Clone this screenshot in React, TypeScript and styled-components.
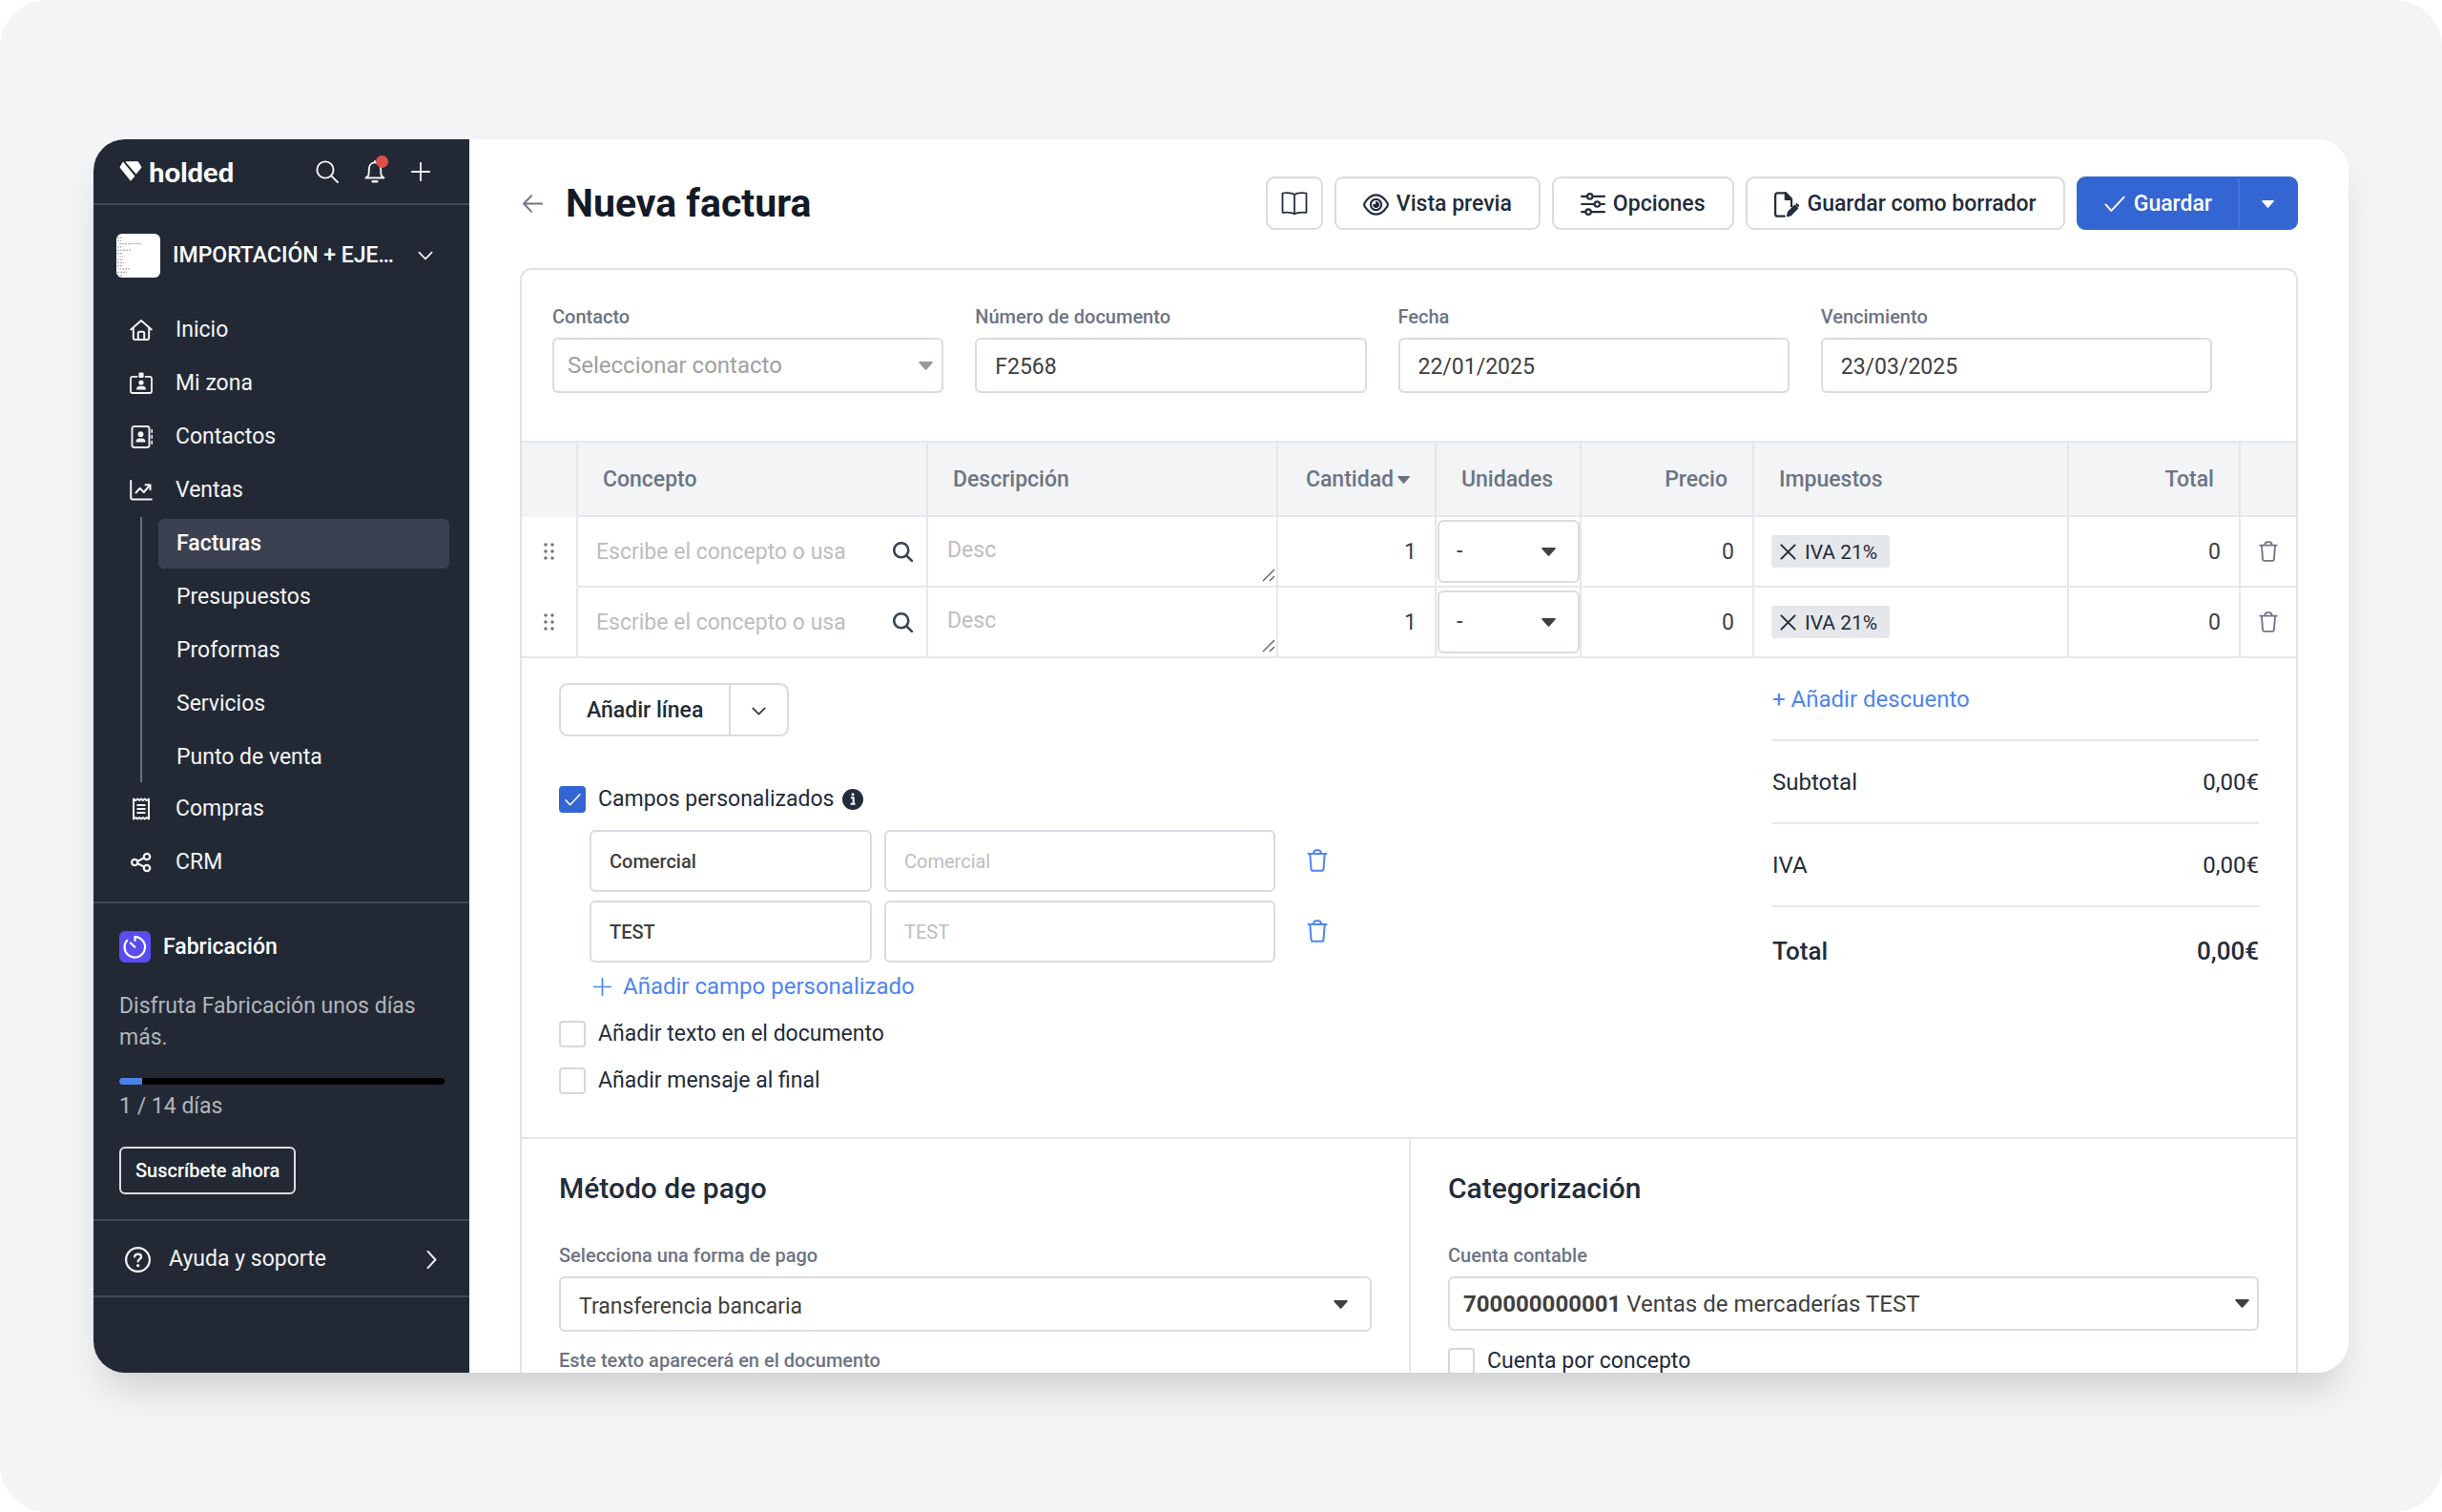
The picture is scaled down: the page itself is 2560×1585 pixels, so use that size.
import React, { useId, useState } from "react";
import styled, { createGlobalStyle, css } from "styled-components";

const color = {
  page: "#f2f4f6",
  navy: "#222935",
  navyActive: "#3b4150",
  navyLine: "#434956",
  ink: "#232c3a",
  title: "#141a26",
  value: "#404040",
  muted: "#6c7484",
  hint: "#bdbdbd",
  line: "#e5e7eb",
  border: "#d8dbe2",
  blue: "#3366d2",
  link: "#4f85ee",
};

const GlobalStyle = createGlobalStyle`
  *, *::before, *::after { box-sizing: border-box; }
  body { margin: 0; background: #fff; }
  body, button, input, select, textarea {
    font-family: Roboto, "Liberation Sans", sans-serif;
    font-size: 23px;
    line-height: 32px;
  }
  button, select { cursor: pointer; }
  h1, h2, p, ul, dl, dd { margin: 0; padding: 0; }
  ul { list-style: none; }
  svg { display: block; flex: none; }
`;

/* ---------- frame ---------- */

const Page = styled.div`
  height: 100vh;
  padding: 146px 98px;
  border-radius: 50px;
  background: ${color.page};
`;

const Window = styled.div`
  display: flex;
  height: 100%;
  overflow: hidden;
  border-radius: 33px;
  background: #fff;
  box-shadow: 0 26px 40px -12px rgba(0, 0, 0, 0.17);
`;

/* ---------- sidebar ---------- */

const Sidebar = styled.aside`
  flex: none;
  width: 394px;
  background: ${color.navy};
  color: #f3f4f6;
`;

const SideTop = styled.div`
  display: flex;
  align-items: center;
  justify-content: space-between;
  height: 69px;
  padding: 0 41px 0 27px;
  border-bottom: 2px solid ${color.navyLine};
`;

const Brand = styled.a`
  display: flex;
  align-items: center;
  gap: 7px;
  color: #fff;
  font-family: Lato, Roboto, sans-serif;
  font-size: 29px;
  font-weight: 900;
  line-height: 30px;
  text-decoration: none;
`;

const SideTools = styled.div`
  display: flex;
  align-items: center;
  gap: 26px;
`;

const PlainButton = styled.button`
  position: relative;
  display: flex;
  padding: 0;
  border: 0;
  background: none;
  color: inherit;
`;

const Dot = styled.span`
  position: absolute;
  top: -5px;
  right: -2px;
  width: 13px;
  height: 13px;
  border-radius: 50%;
  background: #df5049;
`;

const Account = styled.button`
  display: flex;
  align-items: center;
  width: 100%;
  height: 103px;
  padding: 2px 38px 0 24px;
  border: 0;
  background: none;
  color: #fff;
  font-weight: 500;
`;

const Avatar = styled.span`
  flex: none;
  width: 46px;
  height: 46px;
  margin-right: 13px;
  border-radius: 6px;
  background: #fff;
  overflow: hidden;
`;

const AccountName = styled.span`
  flex: 1;
  text-align: left;
`;

const NavLink = styled.a`
  display: flex;
  align-items: center;
  gap: 24px;
  height: 56px;
  padding-left: 38px;
  color: inherit;
  text-decoration: none;
`;

const SubNav = styled.ul`
  display: grid;
  gap: 4px;
  margin: 0 21px 0 49px;
  padding: 2px 0 0 17px;
  border-left: 2px solid #6b717d;
`;

const SubLink = styled.a<{ $active?: boolean }>`
  display: flex;
  align-items: center;
  height: 52px;
  padding-left: 19px;
  border-radius: 6px;
  color: inherit;
  text-decoration: none;
  ${(p) =>
    p.$active &&
    css`
      background: ${color.navyActive};
      color: #fff;
      font-weight: 500;
    `}
`;

const Trial = styled.section`
  margin-top: 13px;
  padding: 29px 26px 26px 27px;
  border-top: 2px solid ${color.navyLine};
  border-bottom: 2px solid ${color.navyLine};
  color: #b1b5bc;
`;

const TrialTitle = styled.h2`
  display: flex;
  align-items: center;
  gap: 13px;
  height: 33px;
  color: #fff;
  font-size: 23px;
  font-weight: 500;
`;

const TrialText = styled.p`
  margin: 29px 0 26px;
  line-height: 33px;
`;

const Track = styled.div`
  height: 7px;
  margin-bottom: 7px;
  border-radius: 4px;
  background: #000;
  overflow: hidden;
`;

const Fill = styled.div`
  height: 100%;
  background: #4b82e8;
`;

const Subscribe = styled.button`
  height: 50px;
  margin-top: 26px;
  padding: 0 15px;
  border: 2px solid #dcdee1;
  border-radius: 6px;
  background: none;
  color: #fff;
  font-size: 20px;
  font-weight: 500;
`;

const Help = styled.a`
  display: flex;
  align-items: center;
  gap: 19px;
  height: 80px;
  padding: 2px 30px 0 33px;
  border-bottom: 2px solid ${color.navyLine};
  color: inherit;
  text-decoration: none;

  span { flex: 1; }
`;

/* ---------- main ---------- */

const Main = styled.main`
  flex: 1;
  min-width: 0;
  padding: 39px 53px 0 53px;
  color: ${color.ink};
`;

const Header = styled.header`
  display: flex;
  align-items: center;
  height: 56px;
  margin-bottom: 40px;
`;

const Back = styled.a`
  display: flex;
  margin: 0 24px 0 3px;
  color: #6e7583;
`;

const Title = styled.h1`
  flex: 1;
  color: ${color.title};
  font-size: 41px;
  font-weight: 700;
  line-height: 48px;
`;

const Actions = styled.div`
  display: flex;
  gap: 12px;
`;

const Action = styled.button<{ $square?: boolean }>`
  display: flex;
  align-items: center;
  justify-content: center;
  gap: 8px;
  height: 56px;
  padding: ${(p) => (p.$square ? "0 14px" : "2px 28px 0")};
  border: 2px solid ${color.border};
  border-radius: 9px;
  background: #fff;
  color: ${color.ink};
  font-weight: 500;
`;

const Split = styled.div<{ $primary?: boolean }>`
  display: flex;
  width: max-content;
  height: 56px;
  border: 2px solid ${(p) => (p.$primary ? color.blue : color.border)};
  border-radius: 9px;
  background: ${(p) => (p.$primary ? color.blue : "#fff")};
  color: ${(p) => (p.$primary ? "#fff" : color.ink)};
  overflow: hidden;
`;

const SplitMain = styled.button`
  display: flex;
  align-items: center;
  gap: 9px;
  padding: 2px 27px 0;
  border: 0;
  background: none;
  color: inherit;
  font-weight: 500;
`;

const SplitToggle = styled.button<{ $line: string }>`
  display: flex;
  align-items: center;
  justify-content: center;
  width: 61px;
  padding: 2px 0 0;
  border: 0;
  border-left: 2px solid ${(p) => p.$line};
  background: none;
  color: inherit;
`;

const Card = styled.div`
  border: 2px solid #e0e2e6;
  border-bottom: 0;
  border-radius: 12px 12px 0 0;
`;

const Fields = styled.div`
  display: grid;
  grid-template-columns: repeat(4, 1fr);
  gap: 33px;
  padding: 37px 88px 50px 32px;
`;

const Field = styled.div`
  display: flex;
  flex-direction: column;
  gap: 10px;
`;

const Label = styled.label`
  color: ${color.muted};
  font-size: 20px;
  font-weight: 500;
  line-height: 24px;
`;

const control = css`
  width: 100%;
  border: 2px solid ${color.border};
  border-radius: 6px;
  background: #fff;
  color: ${color.value};
`;

const TextInput = styled.input<{ $custom?: boolean; $strong?: boolean }>`
  ${control}
  height: ${(p) => (p.$custom ? 65 : 58)}px;
  padding: ${(p) => (p.$custom ? "0" : "2px")} 19px 0;
  font-size: ${(p) => (p.$custom ? 20 : 23)}px;
  font-weight: ${(p) => (p.$strong ? 500 : 400)};

  &::placeholder { color: ${color.hint}; opacity: 1; }
`;

const SelectBox = styled.div<{ $end: number }>`
  display: grid;
  align-items: center;

  & > * { grid-area: 1 / 1; }
  & > svg {
    justify-self: end;
    margin-right: ${(p) => p.$end}px;
    pointer-events: none;
  }
`;

const Select = styled.select<{ $tall?: boolean; $pad: number; $drop?: number; $faded?: boolean }>`
  ${control}
  appearance: none;
  height: ${(p) => (p.$tall ? 66 : 58)}px;
  padding: ${(p) => p.$drop ?? 0}px ${(p) => p.$pad}px 0;
  ${(p) => p.$faded && "color: #a0a0a0; font-size: 24px;"}
`;

const Combo = styled.button`
  ${control}
  height: 57px;
  padding: 0 14px;
  font-size: 24px;
  text-align: left;
`;

/* ---------- lines table ---------- */

const Lines = styled.table`
  width: 100%;
  table-layout: fixed;
  border-collapse: separate;
  border-spacing: 0;
  border-top: 2px solid ${color.line};
`;

const Th = styled.th<{ $align?: string; $bare?: boolean }>`
  height: 78px;
  padding: 2px 26px 0;
  border-right: 2px solid ${color.line};
  border-bottom: 2px solid ${(p) => (p.$bare ? color.page : color.line)};
  background: ${color.page};
  color: ${color.muted};
  font-weight: 500;
  text-align: ${(p) => p.$align ?? "left"};
  white-space: nowrap;

  &:last-child { border-right: 0; }
`;

const Sort = styled.button`
  display: inline-flex;
  align-items: center;
  gap: 4px;
  padding: 0;
  border: 0;
  background: none;
  color: inherit;
  font-weight: 500;
`;

const Td = styled.td<{ $open?: boolean }>`
  height: 74px;
  padding: 0;
  border-right: 2px solid ${color.line};
  border-bottom: 2px solid ${(p) => (p.$open ? "#fff" : color.line)};

  &:last-child { border-right: 0; }
`;

const Cell = styled.div<{ $center?: boolean }>`
  position: relative;
  display: flex;
  align-items: center;
  justify-content: ${(p) => (p.$center ? "center" : "flex-start")};
  height: 72px;
`;

const CellInput = styled.input<{ $end?: boolean }>`
  flex: 1;
  min-width: 0;
  padding: 2px 19px 0;
  border: 0;
  background: none;
  color: ${color.value};
  text-align: ${(p) => (p.$end ? "right" : "left")};

  &::placeholder { color: ${color.hint}; opacity: 1; }
`;

const CellArea = styled.textarea`
  flex: 1;
  min-width: 0;
  height: 36px;
  padding: 1px 20px;
  border: 0;
  background: none;
  resize: none;

  &::placeholder { color: ${color.hint}; opacity: 1; }
`;

const Grip = styled.svg`
  position: absolute;
  right: 1px;
  bottom: 4px;
`;

const SearchSlot = styled(PlainButton)`
  margin-right: 14px;
  color: #3a4557;
`;

const UnitCell = styled.div`
  padding: 3px 0 3px 1px;
`;

const Tag = styled.span`
  display: flex;
  align-items: center;
  gap: 9px;
  height: 34px;
  margin-left: 18px;
  padding: 1px 13px 0 9px;
  border-radius: 3px;
  background: #e5e7eb;
  font-size: 21px;
`;

/* ---------- extras and totals ---------- */

const Body = styled.div`
  display: flex;
  justify-content: space-between;
  padding: 0 39px;
  border-bottom: 2px solid ${color.line};
`;

const Extras = styled.div`
  padding: 26px 0 45px;
`;

const CheckLine = styled.div<{ $top: number }>`
  display: flex;
  align-items: center;
  height: 28px;
  margin-top: ${(p) => p.$top}px;

  & > svg { margin-left: 9px; }
`;

const TickBox = styled.span`
  display: grid;
  place-items: center;
  margin-right: 13px;
  color: #fff;

  & > * { grid-area: 1 / 1; }
  & > svg { pointer-events: none; }
`;

const Tick = styled.input`
  appearance: none;
  width: 28px;
  height: 28px;
  margin: 0;
  border: 2px solid #d5d7da;
  border-radius: 4px;
  background: #fff;

  &:checked {
    border-color: ${color.blue};
    background: ${color.blue};
  }
`;

const CustomFields = styled.div`
  display: grid;
  gap: 9px;
  margin: 18px 0 9px 32px;
`;

const CustomRow = styled.div`
  display: grid;
  grid-template-columns: 296px 410px auto;
  align-items: center;
  gap: 13px;
`;

const Remove = styled(PlainButton)<{ $blue?: boolean }>`
  margin: ${(p) => (p.$blue ? "0 0 2px 19px" : "0")};
  color: ${(p) => (p.$blue ? color.link : "#6e7583")};
`;

const LinkButton = styled.button<{ $indent?: boolean }>`
  display: flex;
  align-items: center;
  gap: 12px;
  margin-left: ${(p) => (p.$indent ? 36 : 0)}px;
  padding: 0;
  border: 0;
  background: none;
  color: ${color.link};
  font-size: 24px;
`;

const Totals = styled.div`
  flex: none;
  width: 510px;
`;

const TotalRow = styled.div<{ $grand?: boolean }>`
  display: flex;
  align-items: center;
  justify-content: space-between;
  height: ${(p) => (p.$grand ? 92 : 87)}px;
  font-size: 24px;
  ${(p) =>
    p.$grand
      ? "font-size: 26px; font-weight: 500;"
      : `border-bottom: 2px solid ${color.line};`}
`;

const Bottom = styled.div`
  display: grid;
  grid-template-columns: 1fr 1fr;
`;

const Panel = styled.section`
  display: flex;
  flex-direction: column;
  padding: 34px 39px 40px;

  & + & { border-left: 2px solid ${color.line}; }
`;

const PanelTitle = styled.h2`
  margin-bottom: 40px;
  font-size: 30px;
  font-weight: 500;
  line-height: 36px;
`;

const Note = styled(Label)`
  display: block;
  margin: 18px 0 10px;
`;

/* ---------- icons ---------- */

type IconProps = { size?: number; w?: number; children: React.ReactNode; box?: string };
const Icon = ({ size = 24, w = 2, box = "0 0 24 24", children }: IconProps) => (
  <svg width={size} height={size} viewBox={box} fill="none" stroke="currentColor" strokeWidth={w} strokeLinecap="round" strokeLinejoin="round" aria-hidden="true">
    {children}
  </svg>
);

const Mark = () => (
  <svg width="24" height="21" viewBox="0 0 23 21" fill="#fff" stroke="#fff" strokeWidth="1.2" strokeLinejoin="round" aria-hidden="true">
    <path d="M6.900 .8h12L22.300 6.400 17.200 12.700z" />
    <path d="M3.500 1.500.7 6.400 11.500 19.800l3.600-4.200z" />
  </svg>
);
const SearchIcon = ({ size = 24, w = 2 }) => (
  <Icon size={size} w={w}><circle cx="10" cy="10" r="8.600" /><path d="m16.300 16.300 6.700 6.700" /></Icon>
);
const BellIcon = () => (
  <Icon w={1.9}>
    <path d="M12 1v1.200M4.900 16.600c.9-1.700.9-3.800.9-7.200C5.800 5.200 8.400 2.400 12 2.400s6.200 2.800 6.200 7c0 3.400 0 5.500.9 7.200l2.400 1.900h-19z" />
    <path d="M9.800 22.300h4.400" strokeWidth="2.600" />
  </Icon>
);
const PlusIcon = ({ size = 20, w = 2.2 }) => <Icon size={size} w={w}><path d="M12 1v22M1 12h22" /></Icon>;
const Chevron = ({ size = 15, dir = "down" }) => (
  <Icon size={size} w={2.4}><path d={dir === "down" ? "m2 7 10 10L22 7" : "m7 1 10 11L7 23"} /></Icon>
);
const HomeIcon = () => (
  <Icon w={2}><path d="M1.2 11.4 12 2l10.8 9.4M3.8 9.4V20c0 1.300.7 2 2 2h12.400c1.300 0 2-.7 2-2V9.400" /><path d="M8.800 21.500v-6.300c0-1 .5-1.500 1.500-1.500h3.400c1 0 1.500.5 1.500 1.500v6.300" /></Icon>
);
const BadgeIcon = () => (
  <Icon w={1.8}>
    <path d="M7.500 4.800H3c-1.200 0-2 .8-2 2V20c0 1.200.8 2 2 2h18c1.200 0 2-.8 2-2V6.800c0-1.200-.8-2-2-2h-4.500" />
    <g fill="currentColor" stroke="none"><rect x="9.400" y=".6" width="5.200" height="5.400" rx="1.200" /><circle cx="12" cy="11" r="2.600" /><path d="M7 18.600c0-2.400 1.400-3.800 3.400-3.800h3.200c2 0 3.400 1.400 3.400 3.800z" /></g>
  </Icon>
);
const ContactsIcon = () => (
  <Icon w={1.9}>
    <rect x="2.500" y="1" width="18" height="22" rx="2.200" />
    <path d="M23.200 4.500v2.800M23.200 10.500v2.800M23.200 16.500v2.800" strokeWidth="1.600" />
    <g fill="currentColor" stroke="none"><circle cx="11.500" cy="9.200" r="2.900" /><path d="M6.500 17.500c0-2.600 1.500-4 3.500-4h3c2 0 3.500 1.400 3.500 4z" /></g>
  </Icon>
);
const SalesIcon = () => (
  <Icon w={2}><path d="M1.200 2v17.500c0 1.200.8 2 2 2h19.600" /><path d="m6.500 14.500 4-4.700 4.300 4.200 6.200-7.300M16.500 6.200h5v5" /></Icon>
);
const ReceiptIcon = () => (
  <Icon w={2}>
    <path d="M4 1.500 6.300 3l2-1.500L10.200 3 12 1.500 13.800 3l1.900-1.500 2 1.500L20 1.500v21L17.700 21l-2 1.500-1.900-1.500-1.800 1.500-1.800-1.500-1.900 1.500-2-1.500L4 22.500z" />
    <path d="M8.200 8h7.600M8.200 12h7.600M8.200 16h7.600" />
  </Icon>
);
const ShareIcon = () => (
  <Icon w={2.2}><circle cx="5.200" cy="12" r="3.200" /><circle cx="18" cy="6" r="3.200" /><circle cx="18" cy="18" r="3.200" /><path d="m8.200 10.700 6.800-3.300M8.200 13.300l6.800 3.300" /></Icon>
);
const TimerIcon = () => (
  <svg width="33" height="33" viewBox="0 0 33 33" fill="none" stroke="#fff" strokeWidth="2.200" strokeLinecap="round" aria-hidden="true">
    <rect width="33" height="33" rx="6" fill="#5a4df0" stroke="none" />
    <path d="M16.500 10V6.200A10.700 10.700 0 1 1 8.300 9.800M12 12.500l4.300 4.200" />
  </svg>
);
const HelpIcon = () => (
  <Icon size={27} w={2}><circle cx="12" cy="12" r="11" /><path d="M8.900 9.200c.3-1.700 1.500-2.500 3.200-2.500 1.800 0 3.100 1 3.100 2.600 0 2.400-3.100 2.400-3.100 4.400" /><path d="M12.100 17.400v.1" strokeWidth="2.800" /></Icon>
);
const BackIcon = () => <Icon size={21} w={2.2}><path d="M23 12H1.500M10.500 2.500 1.200 12l9.300 9.500" /></Icon>;
const BookIcon = () => (
  <Icon size={28} w={1.5}><path d="M12 4.500C10 2.800 5 2.600 1.300 3v17.400c3.700-.4 8.700-.2 10.700 1.400 2-1.600 7-1.800 10.700-1.400V3C19 2.600 14 2.800 12 4.500zV21.800" /></Icon>
);
const EyeIcon = () => (
  <Icon size={27} w={1.9}>
    <path d="M12 3c4.600 0 7.800 3 10.500 7.300.7 1.200.7 2.200 0 3.400C19.800 18 16.600 21 12 21s-7.800-3-10.500-7.300c-.7-1.200-.7-2.200 0-3.400C4.200 6 7.400 3 12 3z" />
    <circle cx="12" cy="12" r="5" /><path d="M12 9.500V12H9.500a2.600 2.600 0 1 0 2.500-2.500z" fill="currentColor" strokeWidth="1" />
  </Icon>
);
const SlidersIcon = () => (
  <Icon size={26} w={2}>
    <path d="M1 4.500h5M12 4.500h11M1 12h12M19 12h4M1 19.500h3.500M10.500 19.500H23" />
    <circle cx="9" cy="4.500" r="2.500" /><circle cx="16" cy="12" r="2.500" /><circle cx="7.500" cy="19.500" r="2.500" />
  </Icon>
);
const DraftIcon = () => (
  <Icon size={27} w={2}>
    <path d="M9.500 22.800H3.200c-1.300 0-2.200-.8-2.200-2.200V3.400C1 2 1.900 1.200 3.200 1.200h7.300L16 7v6.500" />
    <path d="M10.500 1.200V7H16z" fill="currentColor" />
    <path d="m13.300 19.200 5.800-6 2.200 2.200-5.800 6-3 .9zM21 11.700l1.300 1.400" fill="currentColor" />
  </Icon>
);
const CheckIcon = ({ size = 22, w = 2.1 }) => <Icon size={size} w={w}><path d="m1.500 12.500 6.500 7L22.500 4" /></Icon>;
const Caret = ({ width = 15, fill = "#404040" }) => (
  <svg width={width} height={Math.round(width * 0.6)} viewBox="0 0 15 9" fill={fill} aria-hidden="true"><path d="M1 0h13q1.200.4.500 1.400L8.300 8.500q-.8.700-1.600 0L.5 1.400Q-.2.400 1 0z" /></svg>
);
const TrashIcon = ({ size = 22 }) => (
  <Icon size={size} w={2}><path d="M2.500 5h19M4.300 5l1.200 15.800c.1 1.200.8 1.900 2 1.900h9c1.200 0 1.900-.7 2-1.900L19.700 5M7.800 5c.4-2.400 1.400-3.700 3-3.700h2.400c1.600 0 2.600 1.300 3 3.700" /></Icon>
);
const DotsIcon = () => (
  <svg width="11" height="18" viewBox="0 0 11 18" fill="#6e7583" aria-hidden="true">
    {[2, 9].map((x) => [2, 9, 16].map((y) => <circle key={`${x}${y}`} cx={x} cy={y} r="1.800" />))}
  </svg>
);
const CloseIcon = () => <Icon size={17} w={2.8}><path d="m2 2 20 20M22 2 2 22" /></Icon>;
const InfoIcon = () => (
  <svg width="22" height="22" viewBox="0 0 22 22" aria-hidden="true">
    <circle cx="11" cy="11" r="11" fill={color.ink} />
    <path d="M9 9.200h2.700v6.300M8.700 15.800h4.800" stroke="#fff" strokeWidth="2" fill="none" /><circle cx="11" cy="5.700" r="1.500" fill="#fff" />
  </svg>
);
const Thumb = () => (
  <svg width="46" height="46" viewBox="0 0 46 46" stroke="#9a9da3" strokeWidth="1" aria-hidden="true">
    {[5, 4, 24, 5, 14, 6, 4, 5, 7, 5, 11, 10, 5].map((w, i) => (
      <path key={i} d={`M${i % 4 === 2 ? 3 : 1} ${4 + i * 3.3}h${w}`} strokeDasharray="2 1" />
    ))}
  </svg>
);

/* ---------- parts ---------- */

function LabeledInput({ label, value }: { label: string; value: string }) {
  const id = useId();
  return (
    <Field>
      <Label htmlFor={id}>{label}</Label>
      <TextInput id={id} defaultValue={value} />
    </Field>
  );
}

function CheckRow({ label, top, on, info }: { label: string; top: number; on?: boolean; info?: boolean }) {
  const id = useId();
  const [checked, setChecked] = useState(!!on);
  return (
    <CheckLine $top={top}>
      <TickBox>
        <Tick id={id} type="checkbox" checked={checked} onChange={(e) => setChecked(e.target.checked)} />
        {checked && <CheckIcon size={17} />}
      </TickBox>
      <label htmlFor={id}>{label}</label>
      {info && <InfoIcon />}
    </CheckLine>
  );
}

function LineRow({ last }: { last?: boolean }) {
  return (
    <tr>
      <Td $open={!last}><Cell $center><DotsIcon /></Cell></Td>
      <Td>
        <Cell>
          <CellInput aria-label="Concepto" placeholder="Escribe el concepto o usa" />
          <SearchSlot type="button" aria-label="Buscar"><SearchIcon size={21} w={3} /></SearchSlot>
        </Cell>
      </Td>
      <Td>
        <Cell>
          <CellArea aria-label="Descripción" placeholder="Desc" rows={1} />
          <Grip width="14" height="14" viewBox="0 0 14 14" stroke="#6b6b6b" strokeWidth="1.500"><path d="M1 13 13 1M8 13l5-5" /></Grip>
        </Cell>
      </Td>
      <Td><Cell><CellInput $end aria-label="Cantidad" defaultValue="1" /></Cell></Td>
      <Td>
        <UnitCell>
          <SelectBox $end={25}>
            <Select $tall $pad={18} aria-label="Unidades"><option>-</option></Select>
            <Caret />
          </SelectBox>
        </UnitCell>
      </Td>
      <Td><Cell><CellInput $end aria-label="Precio" defaultValue="0" /></Cell></Td>
      <Td>
        <Cell>
          <Tag>
            <PlainButton type="button" aria-label="Quitar impuesto"><CloseIcon /></PlainButton>
            IVA 21%
          </Tag>
        </Cell>
      </Td>
      <Td><Cell><CellInput $end aria-label="Total" defaultValue="0" /></Cell></Td>
      <Td><Cell $center><Remove type="button" aria-label="Eliminar línea"><TrashIcon /></Remove></Cell></Td>
    </tr>
  );
}

const columns = [59, 0, 0, 166, 152, 181, 330, 180, 58];
const topLinks = [
  { label: "Inicio", icon: <HomeIcon /> },
  { label: "Mi zona", icon: <BadgeIcon /> },
  { label: "Contactos", icon: <ContactsIcon /> },
];
const salesLinks = ["Facturas", "Presupuestos", "Proformas", "Servicios", "Punto de venta"];

export default function App() {
  return (
    <>
      <GlobalStyle />
      <Page>
        <Window>
          <Sidebar>
            <SideTop>
              <Brand href="#"><Mark />holded</Brand>
              <SideTools>
                <PlainButton aria-label="Buscar"><SearchIcon w={1.9} /></PlainButton>
                <PlainButton aria-label="Notificaciones"><BellIcon /><Dot /></PlainButton>
                <PlainButton aria-label="Crear"><PlusIcon /></PlainButton>
              </SideTools>
            </SideTop>
            <Account>
              <Avatar><Thumb /></Avatar>
              <AccountName>IMPORTACIÓN + EJE…</AccountName>
              <Chevron size={16} />
            </Account>
            <nav>
              <ul>
                {topLinks.map((l) => (
                  <li key={l.label}><NavLink href="#">{l.icon}{l.label}</NavLink></li>
                ))}
                <li>
                  <NavLink href="#"><SalesIcon />Ventas</NavLink>
                  <SubNav>
                    {salesLinks.map((l, i) => (
                      <li key={l}><SubLink href="#" $active={i === 0}>{l}</SubLink></li>
                    ))}
                  </SubNav>
                </li>
                <li><NavLink href="#"><ReceiptIcon />Compras</NavLink></li>
                <li><NavLink href="#"><ShareIcon />CRM</NavLink></li>
              </ul>
            </nav>
            <Trial>
              <TrialTitle><TimerIcon />Fabricación</TrialTitle>
              <TrialText>Disfruta Fabricación unos días más.</TrialText>
              <Track><Fill style={{ width: `${(1 / 14) * 100}%` }} /></Track>
              <p>1 / 14 días</p>
              <Subscribe>Suscríbete ahora</Subscribe>
            </Trial>
            <Help href="#"><HelpIcon /><span>Ayuda y soporte</span><Chevron size={19} dir="right" /></Help>
          </Sidebar>

          <Main>
            <Header>
              <Back href="#" aria-label="Volver"><BackIcon /></Back>
              <Title>Nueva factura</Title>
              <Actions>
                <Action $square aria-label="Guía"><BookIcon /></Action>
                <Action><EyeIcon />Vista previa</Action>
                <Action><SlidersIcon />Opciones</Action>
                <Action><DraftIcon />Guardar como borrador</Action>
                <Split $primary>
                  <SplitMain><CheckIcon />Guardar</SplitMain>
                  <SplitToggle $line="#4675d7" aria-label="Más opciones de guardado"><Caret width={13} fill="#fff" /></SplitToggle>
                </Split>
              </Actions>
            </Header>

            <Card>
              <Fields>
                <Field>
                  <Label htmlFor="contacto">Contacto</Label>
                  <SelectBox $end={11}>
                    <Select id="contacto" $pad={14} $faded><option>Seleccionar contacto</option></Select>
                    <Caret fill="#999" />
                  </SelectBox>
                </Field>
                <LabeledInput label="Número de documento" value="F2568" />
                <LabeledInput label="Fecha" value="22/01/2025" />
                <LabeledInput label="Vencimiento" value="23/03/2025" />
              </Fields>

              <Lines>
                <colgroup>
                  {columns.map((w, i) => <col key={i} style={w ? { width: w } : undefined} />)}
                </colgroup>
                <thead>
                  <tr>
                    <Th $bare aria-label="Orden" />
                    <Th>Concepto</Th>
                    <Th>Descripción</Th>
                    <Th $align="right"><Sort>Cantidad<Caret width={13} fill={color.muted} /></Sort></Th>
                    <Th>Unidades</Th>
                    <Th $align="right">Precio</Th>
                    <Th>Impuestos</Th>
                    <Th $align="right">Total</Th>
                    <Th aria-label="Acciones" />
                  </tr>
                </thead>
                <tbody>
                  <LineRow />
                  <LineRow last />
                </tbody>
              </Lines>

              <Body>
                <Extras>
                  <Split>
                    <SplitMain>Añadir línea</SplitMain>
                    <SplitToggle $line={color.border} aria-label="Más tipos de línea"><Chevron /></SplitToggle>
                  </Split>
                  <CheckRow label="Campos personalizados" top={52} on info />
                  <CustomFields>
                    {["Comercial", "TEST"].map((name) => (
                      <CustomRow key={name}>
                        <TextInput $custom $strong aria-label="Nombre del campo" defaultValue={name} />
                        <TextInput $custom aria-label={name} placeholder={name} />
                        <Remove type="button" $blue aria-label={`Eliminar ${name}`}><TrashIcon size={24} /></Remove>
                      </CustomRow>
                    ))}
                  </CustomFields>
                  <LinkButton type="button" $indent><PlusIcon size={19} />Añadir campo personalizado</LinkButton>
                  <CheckRow label="Añadir texto en el documento" top={20} />
                  <CheckRow label="Añadir mensaje al final" top={21} />
                </Extras>
                <Totals>
                  <TotalRow><LinkButton type="button">+ Añadir descuento</LinkButton></TotalRow>
                  <TotalRow><span>Subtotal</span><span>0,00€</span></TotalRow>
                  <TotalRow><span>IVA</span><span>0,00€</span></TotalRow>
                  <TotalRow $grand><span>Total</span><span>0,00€</span></TotalRow>
                </Totals>
              </Body>

              <Bottom>
                <Panel>
                  <PanelTitle>Método de pago</PanelTitle>
                  <Field>
                    <Label htmlFor="pago">Selecciona una forma de pago</Label>
                    <SelectBox $end={25}>
                      <Select id="pago" $pad={19} $drop={5}><option>Transferencia bancaria</option></Select>
                      <Caret />
                    </SelectBox>
                  </Field>
                  <Note htmlFor="texto-pago">Este texto aparecerá en el documento</Note>
                  <TextInput id="texto-pago" />
                </Panel>
                <Panel>
                  <PanelTitle>Categorización</PanelTitle>
                  <Field>
                    <Label htmlFor="cuenta">Cuenta contable</Label>
                    <SelectBox $end={10}>
                      <Combo id="cuenta" type="button" aria-haspopup="listbox">
                        <b>700000000001</b> Ventas de mercaderías TEST
                      </Combo>
                      <Caret />
                    </SelectBox>
                  </Field>
                  <CheckRow label="Cuenta por concepto" top={18} />
                </Panel>
              </Bottom>
            </Card>
          </Main>
        </Window>
      </Page>
    </>
  );
}
